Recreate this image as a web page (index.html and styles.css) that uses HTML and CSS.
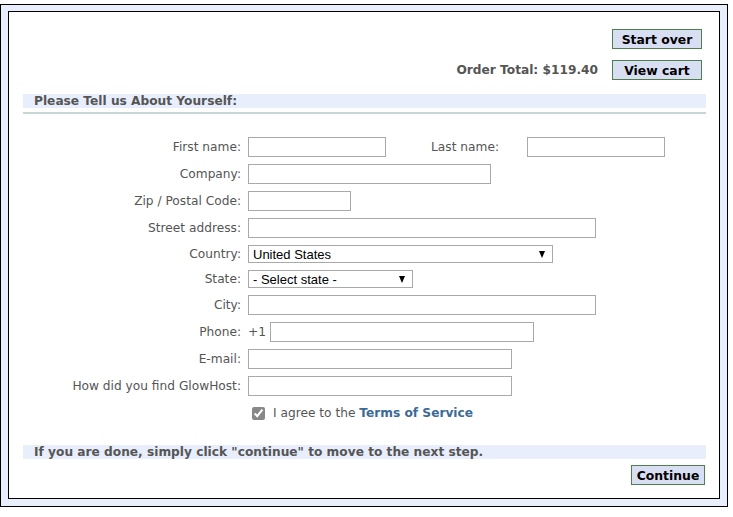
FILE: index.html
```html
<!DOCTYPE html>
<html>
<head>
<meta charset="utf-8">
<link rel="stylesheet" href="styles.css">
</head>
<body>
<div class="frame">
  <div class="panel">
    <div class="top">
      <div class="toprow"><button class="btn" type="button">Start over</button></div>
      <div class="toprow"><span class="total">Order Total: $119.40</span><button class="btn" type="button">View cart</button></div>
    </div>
    <div class="band">Please Tell us About Yourself:</div>
    <div class="rule"></div>
    <div class="form">
      <label class="lbl">First name:</label>
      <div class="fld">
        <input class="in w138" type="text">
        <label class="lbl lastlbl">Last name:</label>
        <input class="in w138 lastin" type="text">
      </div>
      <label class="lbl">Company:</label>
      <div class="fld"><input class="in w243" type="text"></div>
      <label class="lbl">Zip / Postal Code:</label>
      <div class="fld"><input class="in w103" type="text"></div>
      <label class="lbl">Street address:</label>
      <div class="fld"><input class="in w348" type="text"></div>
      <label class="lbl">Country:</label>
      <div class="fld"><div class="select w305"><span>United States</span><span class="arrow"></span></div></div>
      <label class="lbl">State:</label>
      <div class="fld"><div class="select w165"><span>- Select state -</span><span class="arrow"></span></div></div>
      <label class="lbl">City:</label>
      <div class="fld"><input class="in w348" type="text"></div>
      <label class="lbl">Phone:</label>
      <div class="fld"><span class="prefix">+1</span><input class="in w264" type="text"></div>
      <label class="lbl">E-mail:</label>
      <div class="fld"><input class="in w264" type="text"></div>
      <label class="lbl">How did you find GlowHost:</label>
      <div class="fld"><input class="in w264" type="text"></div>
      <div></div>
      <div class="fld agree"><input class="chk" type="checkbox" checked><span>I agree to the <a class="tos" href="#">Terms of Service</a></span></div>
    </div>
    <div class="band bottomband">If you are done, simply click "continue" to move to the next step.</div>
    <div class="actions"><button class="btn btn-cont" type="button">Continue</button></div>
  </div>
</div>
</body>
</html>
```
FILE: styles.css
```css
html, body { margin: 0; padding: 0; background: #fff; }
body { padding-top: 4px; font-family: "DejaVu Sans", Verdana, sans-serif; }
.frame {
  width: 712px;
  border: 1px solid #000;
  background: #e8eefc;
  padding: 6px 7px 7px 7px;
}
.panel {
  border: 1px solid #000;
  background: #fff;
  padding: 17px 13px 13px 14px;
}
.top { display: flex; flex-direction: column; align-items: flex-end; gap: 11px; padding-right: 4px; }
.toprow { display: flex; align-items: center; }
.total { font-weight: bold; font-size: 12.2px; color: #555; margin-right: 14px; }
.btn {
  width: 90px; height: 20px;
  background: #d9dff2;
  border: 1px solid #4f7f4f;
  font-family: Tahoma, "DejaVu Sans", Verdana, sans-serif;
  font-weight: bold; font-size: 12.4px; color: #000;
  padding: 0; margin: 0;
}
.band {
  margin-top: 14px;
  background: #e8eefc;
  height: 14px; line-height: 14px;
  padding-left: 11px;
  font-weight: bold; font-size: 12.2px; color: #555;
}
.rule { height: 2px; background: #c8d6d6; margin-top: 4px; }
.form {
  display: grid;
  grid-template-columns: 218px 1fr;
  column-gap: 7px;
  row-gap: 7px;
  margin-top: 23px;
  align-items: center;
}
.lbl { text-align: right; font-size: 12.2px; color: #555; white-space: nowrap; }
.fld { display: flex; align-items: center; }
.in {
  height: 20px; box-sizing: border-box;
  border: 1px solid #a9a9a9; margin: 0; padding: 0 2px;
  font-size: 13px;
}
.w138 { width: 138px; } .w243 { width: 243px; } .w103 { width: 103px; }
.w348 { width: 348px; } .w264 { width: 264px; } .w305 { width: 305px; } .w165 { width: 165px; }
.lastlbl { width: 113px; }
.lastin { margin-left: 28px; }
.select {
  height: 18px; box-sizing: border-box;
  border: 1px solid #a9a9a9;
  display: flex; align-items: center; justify-content: space-between;
  padding: 0 7px 0 4px;
  font-family: "Liberation Sans", Arial, sans-serif; font-size: 13px; color: #000;
}
.arrow { width: 0; height: 0; border-left: 3.5px solid transparent; border-right: 3.5px solid transparent; border-top: 7px solid #000; }
.prefix { font-size: 12.2px; color: #555; margin-right: 4px; }
.agree { margin-top: 3px; font-size: 12.2px; color: #555; }
.chk { width: 13px; height: 13px; margin: 0 8px 0 4px; accent-color: #888; }
.tos { color: #3c6a96; font-weight: bold; text-decoration: none; }
.bottomband { margin-top: 25px; }
.actions { display: flex; justify-content: flex-end; margin-top: 6px; padding-right: 1px; }
.btn-cont { width: 74px; }
```
